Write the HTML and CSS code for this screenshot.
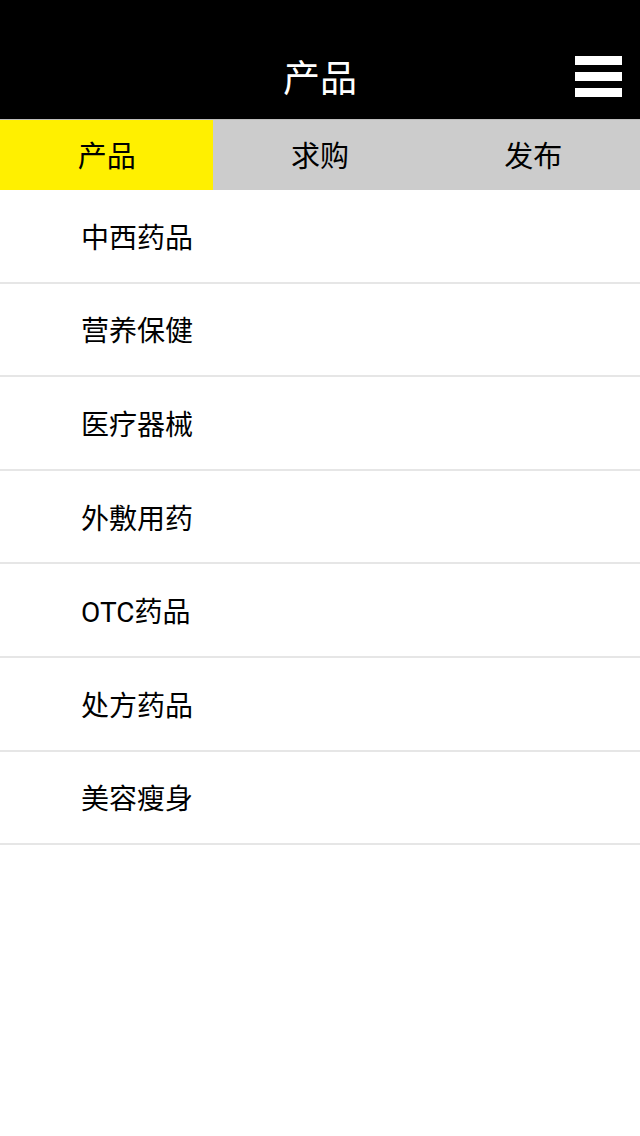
FILE: index.html
```html
<!DOCTYPE html>
<html lang="zh">
<head>
    <meta charset="UTF-8">
    <meta name="viewport" content="width=device-width, initial-scale=1.0">
    <title>产品</title>
    <link rel="stylesheet" href="styles.css">
</head>
<body>
    <header class="top-bar">
        <h1 class="title">产品</h1>
        <div class="menu-btn">
            <span></span>
            <span></span>
            <span></span>
        </div>
    </header>

    <nav class="tabs">
        <div class="tab active">产品</div>
        <div class="tab">求购</div>
        <div class="tab">发布</div>
    </nav>

    <ul class="category-list">
        <li>中西药品</li>
        <li>营养保健</li>
        <li>医疗器械</li>
        <li>外敷用药</li>
        <li>OTC药品</li>
        <li>处方药品</li>
        <li>美容瘦身</li>
    </ul>
</body>
</html>
```

FILE: styles.css
```css
html, body {
    margin: 0;
    padding: 0;
    width: 100%;
    height: 100%;
}

body {
    background: #fff;
    font-family: Roboto, "Noto Sans CJK SC", sans-serif;
    color: #000;
}

.top-bar {
    position: relative;
    height: 119px;
    background: #000;
    display: flex;
    justify-content: center;
    align-items: center;
}

.title {
    margin: 0;
    padding-top: 32px;
    color: #fff;
    font-size: 37px;
    font-weight: normal;
}

/* 右上角菜单按钮 */
.menu-btn {
    position: absolute;
    right: 18px;
    top: 56px;
    width: 47px;
    display: flex;
    flex-direction: column;
    gap: 7px;
}

.menu-btn span {
    display: block;
    height: 9px;
    background: #fff;
}

.tabs {
    display: flex;
    height: 71px;
    background: #cccccc;
    border-top: 1px solid #bdbdbd;
    box-sizing: border-box;
}

.tab {
    flex: 1;
    display: flex;
    justify-content: center;
    align-items: center;
    font-size: 29px;
    padding-bottom: 2px;
}

.tab.active {
    background: #fff000;
}

.category-list {
    list-style: none;
    margin: 0;
    padding: 0;
}

.category-list li {
    height: 93.6px;
    box-sizing: border-box;
    border-bottom: 2px solid #e6e6e6;
    padding-left: 81px;
    display: flex;
    align-items: center;
    font-size: 28px;
}
```
